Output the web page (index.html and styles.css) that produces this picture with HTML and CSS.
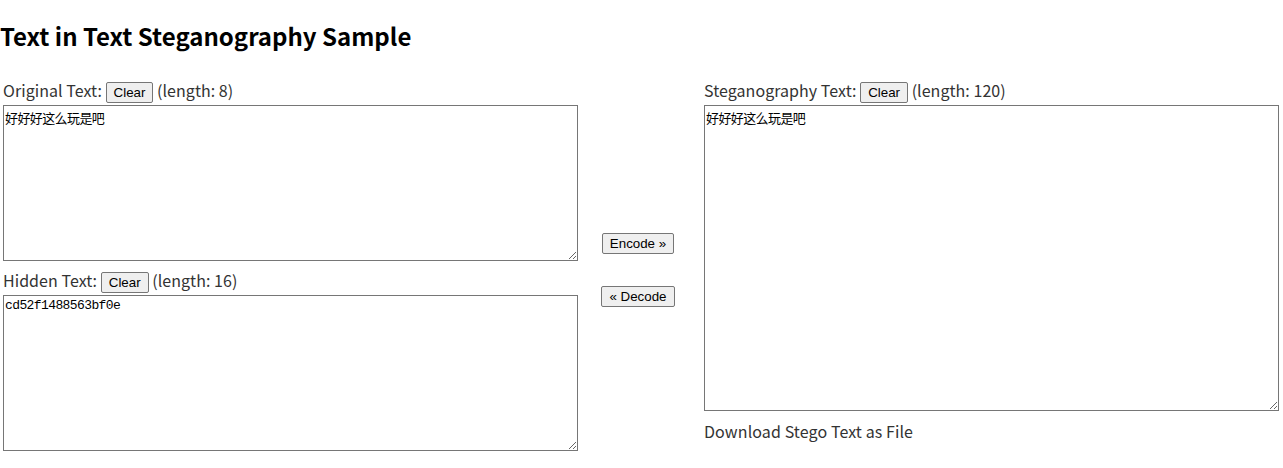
FILE: index.html
```html
<!DOCTYPE html>
<html lang="ja">
<head>
<meta charset="utf-8">
<title>Text in Text Steganography Sample</title>
<link rel="stylesheet" href="styles.css">
</head>
<body>
<h1 class="title">Text in Text Steganography Sample</h1>
<div class="main">
  <div class="col col-left">
    <div class="label-row">Original Text: <button class="btn">Clear</button> (length: 8)</div>
    <textarea class="box box-short">好好好这么玩是吧</textarea>
    <div class="label-row label-gap">Hidden Text: <button class="btn">Clear</button> (length: 16)</div>
    <textarea class="box box-short">cd52f1488563bf0e</textarea>
  </div>
  <div class="col col-mid">
    <button class="btn">Encode »</button>
    <button class="btn btn-decode">« Decode</button>
  </div>
  <div class="col col-right">
    <div class="label-row">Steganography Text: <button class="btn">Clear</button> (length: 120)</div>
    <textarea class="box box-tall">好好好这么玩是吧</textarea>
    <div class="download">Download Stego Text as File</div>
  </div>
</div>
</body>
</html>
```
FILE: styles.css
```css
html, body {
  margin: 0;
  padding: 0;
  background: #ffffff;
}
body {
  font-family: "Noto Sans CJK JP", "Noto Sans", sans-serif;
  color: #333333;
  font-size: 16px;
}
.title {
  margin: 18px 0 26px 0;
  font-size: 24px;
  font-weight: 700;
  color: #000000;
  line-height: 35px;
}
.main {
  display: flex;
  align-items: flex-start;
}
.col-left {
  display: flex;
  flex-direction: column;
  padding-left: 3px;
  width: 575px;
}
.col-mid {
  width: 120px;
  margin-right: 6px;
  display: flex;
  flex-direction: column;
  align-items: center;
  padding-top: 154px;
}
.col-right {
  display: flex;
  flex-direction: column;
  width: 575px;
}
.label-row {
  line-height: 23px;
  height: 23px;
  white-space: nowrap;
  letter-spacing: 0.05px;
}
.label-gap {
  margin-top: 8px;
}
.btn {
  font-family: "Liberation Sans", Arial, sans-serif;
  font-size: 13.33px;
  color: #000000;
  background: #efefef;
  border: 1px solid #767676;
  border-radius: 2px;
  padding: 2px 7px;
  line-height: 15px;
  margin: 0;
  vertical-align: baseline;
  letter-spacing: 0;
}
.btn-decode {
  margin-top: 32px;
}
.box {
  display: block;
  box-sizing: border-box;
  width: 575px;
  margin: 3px 0 0 0;
  border: 1px solid #767676;
  padding: 2px 1px;
  font-family: "Liberation Mono", "Noto Sans CJK JP", monospace;
  font-size: 13px;
  letter-spacing: -0.6px;
  color: #000000;
  resize: both;
  background: #ffffff;
}
.box-short {
  height: 156px;
}
.box-tall {
  height: 306px;
}
.download {
  margin-top: 9px;
  line-height: 23px;
  letter-spacing: 0.1px;
}
```
